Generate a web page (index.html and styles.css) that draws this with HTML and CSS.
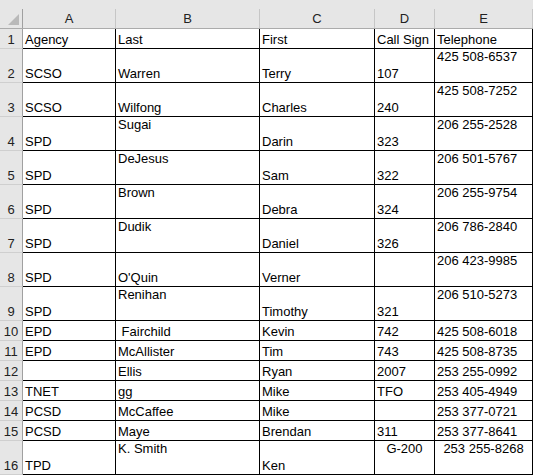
FILE: index.html
```html
<!DOCTYPE html>
<html>
<head>
<meta charset="utf-8">
<link rel="stylesheet" href="styles.css">
</head>
<body>
<div class="sheet">
  <div class="corner"><span class="corner-in"><svg width="22" height="19" viewBox="0 0 22 19"><polygon points="8,16 19,16 19,5" fill="#b9b9b9"/></svg></span></div>
  <div class="colhead"><span>A</span></div>
  <div class="colhead"><span>B</span></div>
  <div class="colhead"><span>C</span></div>
  <div class="colhead"><span>D</span></div>
  <div class="colhead"><span>E</span></div>

  <div class="rowhead">1</div><div class="cell">Agency</div><div class="cell">Last</div><div class="cell">First</div><div class="cell">Call Sign</div><div class="cell">Telephone</div>
  <div class="rowhead">2</div><div class="cell">SCSO</div><div class="cell">Warren</div><div class="cell">Terry</div><div class="cell">107</div><div class="cell top">425 508-6537</div>
  <div class="rowhead">3</div><div class="cell">SCSO</div><div class="cell">Wilfong</div><div class="cell">Charles</div><div class="cell">240</div><div class="cell top">425 508-7252</div>
  <div class="rowhead">4</div><div class="cell">SPD</div><div class="cell top">Sugai</div><div class="cell">Darin</div><div class="cell">323</div><div class="cell top">206 255-2528</div>
  <div class="rowhead">5</div><div class="cell">SPD</div><div class="cell top">DeJesus</div><div class="cell">Sam</div><div class="cell">322</div><div class="cell top">206 501-5767</div>
  <div class="rowhead">6</div><div class="cell">SPD</div><div class="cell top">Brown</div><div class="cell">Debra</div><div class="cell">324</div><div class="cell top">206 255-9754</div>
  <div class="rowhead">7</div><div class="cell">SPD</div><div class="cell top">Dudik</div><div class="cell">Daniel</div><div class="cell">326</div><div class="cell top">206 786-2840</div>
  <div class="rowhead">8</div><div class="cell">SPD</div><div class="cell">O'Quin</div><div class="cell">Verner</div><div class="cell"></div><div class="cell top">206 423-9985</div>
  <div class="rowhead">9</div><div class="cell">SPD</div><div class="cell top">Renihan</div><div class="cell">Timothy</div><div class="cell">321</div><div class="cell top">206 510-5273</div>
  <div class="rowhead">10</div><div class="cell">EPD</div><div class="cell pre"> Fairchild</div><div class="cell">Kevin</div><div class="cell">742</div><div class="cell">425 508-6018</div>
  <div class="rowhead">11</div><div class="cell">EPD</div><div class="cell">McAllister</div><div class="cell">Tim</div><div class="cell">743</div><div class="cell">425 508-8735</div>
  <div class="rowhead">12</div><div class="cell"></div><div class="cell">Ellis</div><div class="cell">Ryan</div><div class="cell">2007</div><div class="cell">253 255-0992</div>
  <div class="rowhead">13</div><div class="cell">TNET</div><div class="cell">gg</div><div class="cell">Mike</div><div class="cell">TFO</div><div class="cell">253 405-4949</div>
  <div class="rowhead">14</div><div class="cell">PCSD</div><div class="cell">McCaffee</div><div class="cell">Mike</div><div class="cell"></div><div class="cell">253 377-0721</div>
  <div class="rowhead">15</div><div class="cell">PCSD</div><div class="cell">Maye</div><div class="cell">Brendan</div><div class="cell">311</div><div class="cell">253 377-8641</div>
  <div class="rowhead">16</div><div class="cell">TPD</div><div class="cell top">K. Smith</div><div class="cell">Ken</div><div class="cell top center">G-200</div><div class="cell top center">253 255-8268</div>
</div>
</body>
</html>
```
FILE: styles.css
```css
html, body {
  margin: 0;
  padding: 0;
  background: #ffffff;
}

.sheet {
  display: grid;
  grid-template-columns: 23px 93px 144px 115px 60px 98px;
  grid-template-rows: 29px 20px repeat(8, 34px) repeat(6, 20px) 34px;
  width: 533px;
  font-family: "Liberation Sans", Arial, sans-serif;
  font-size: 13px;
  line-height: 16px;
  color: #000;
}

.corner,
.colhead {
  background: #e6e6e6;
  border-bottom: 1px solid #ababab;
  display: flex;
  align-items: flex-end;
  box-sizing: border-box;
}

.corner-in {
  flex: 1;
  height: 19px;
  border-right: 1px solid #a0a0a0;
  display: block;
}

.corner-in svg {
  display: block;
}

.colhead span {
  flex: 1;
  height: 19px;
  border-right: 1px solid #c6c6c6;
  display: flex;
  align-items: center;
  justify-content: center;
  color: #222;
  padding-top: 1px;
  box-sizing: border-box;
}

.rowhead {
  background: #e6e6e6;
  border-right: 1px solid #a0a0a0;
  border-bottom: 1px solid #cfcfcf;
  box-sizing: border-box;
  display: flex;
  align-items: flex-end;
  justify-content: center;
  color: #222;
}

.cell {
  border-right: 1px solid #000;
  border-bottom: 1px solid #000;
  box-sizing: border-box;
  display: flex;
  align-items: flex-end;
  padding-left: 2px;
  white-space: nowrap;
  overflow: hidden;
}

.cell.top {
  align-items: flex-start;
}

.cell.center {
  justify-content: center;
  padding-left: 0;
}

.cell.pre {
  white-space: pre;
}
```
